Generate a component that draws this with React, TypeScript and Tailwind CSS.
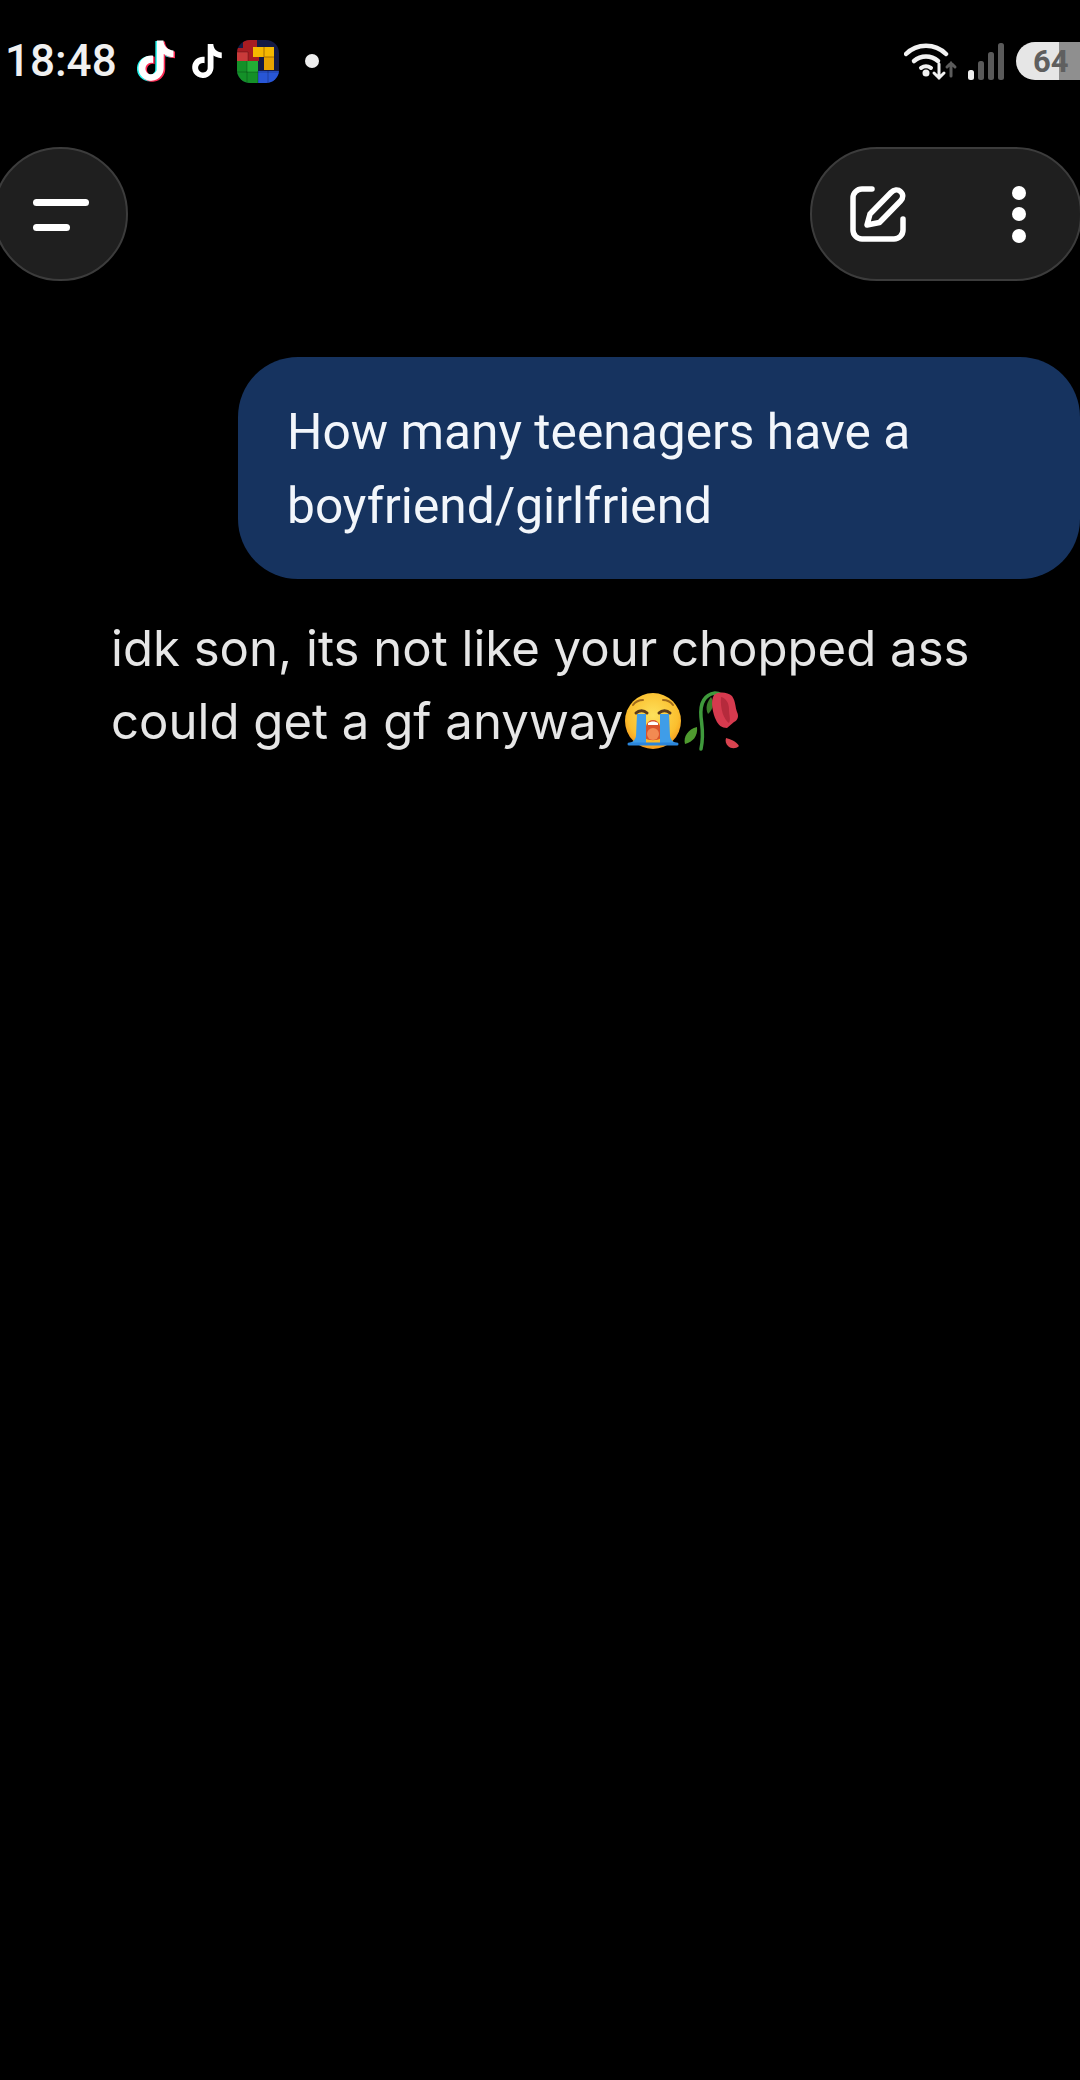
const tiktok = "M12.525.02c1.31-.02 2.61-.01 3.91-.02.08 1.53.63 3.09 1.75 4.17 1.12 1.11 2.7 1.62 4.24 1.79v4.03c-1.44-.05-2.89-.35-4.2-.97-.57-.26-1.1-.59-1.62-.93-.01 2.92.01 5.84-.02 8.75-.08 1.4-.54 2.79-1.35 3.94-1.31 1.92-3.58 3.17-5.91 3.21-1.43.08-2.86-.31-4.08-1.03-2.02-1.19-3.44-3.37-3.65-5.71-.02-.5-.03-1-.01-1.49.18-1.9 1.12-3.72 2.58-4.96 1.66-1.44 3.98-2.13 6.15-1.72.02 1.48-.04 2.96-.04 4.44-.99-.32-2.15-.23-3.02.37-.63.41-1.11 1.04-1.36 1.75-.21.51-.15 1.07-.14 1.61.24 1.64 1.82 3.02 3.5 2.87 1.12-.01 2.19-.66 2.77-1.61.19-.33.4-.67.41-1.06.1-1.79.06-3.57.07-5.36.01-4.03-.01-8.05.02-12.07z";

function TikTokColor() {
  return (
    <svg width="42" height="44" viewBox="-0.5 -0.5 25 25.500" className="ml-[18px] shrink-0">
      <path d={tiktok} fill="#25f4ee" transform="translate(-0.9 0.3)" />
      <path d={tiktok} fill="#fe2c55" transform="translate(0.9 0.6)" />
      <path d={tiktok} fill="#ffffff" />
    </svg>
  );
}

function TikTokWhite() {
  return (
    <svg width="34" height="34" viewBox="0 0 24 24" className="ml-[13px] shrink-0">
      <path d={tiktok} fill="#ffffff" />
    </svg>
  );
}

function BlockApp() {
  return (
    <svg width="42" height="43" viewBox="0 0 42 43" className="ml-[13px] shrink-0">
      <clipPath id="app">
        <rect width="42" height="43" rx="13" />
      </clipPath>
      <g clipPath="url(#app)">
        <rect width="42" height="43" fill="#141a45" />
        <path d="M6 0h14v10h2v11H0V8h6z" fill="#a81c22" />
        <path d="M0 12h11v9H0z" fill="#c93a3a" />
        <path d="M0 21h21v22H0z" fill="#149028" />
        <path d="M10 21h11v11H10z" fill="#22ad35" />
        <path d="M21 31h21v12H21z" fill="#2856d6" />
        <path d="M16 7h21v10H16z" fill="#f5b800" />
        <path d="M27 17h10v13H27z" fill="#e8a400" />
        <path d="M10 21v22M0 32h42M21 31v12M31 31v12M11 12v9M0 12h11" stroke="#00000040" strokeWidth="1" fill="none" />
        <path d="M27 7v10M27 17h10" stroke="#a86f00" strokeWidth="1" fill="none" />
      </g>
    </svg>
  );
}

function Wifi() {
  return (
    <svg width="54" height="40" viewBox="0 0 54 40" fill="none" stroke="#f2f2f2" strokeLinecap="round" className="ml-auto shrink-0">
      <path d="M2 13C13 2 31 2 42 13" strokeWidth="4.500" />
      <path d="M10 20c7-6 17-6 24 0" strokeWidth="4.500" />
      <path d="M17 27c3-2 7-2 10 0" strokeWidth="4" />
      <circle cx="22" cy="32" r="3.500" fill="#f2f2f2" stroke="none" />
      <path d="M35 23v14M30 32l5 5 5-5" strokeWidth="3" />
      <path d="M47 35V22M43 26l4-4 4 4" strokeWidth="3" stroke="#5c5c5c" />
    </svg>
  );
}

function Signal() {
  return (
    <svg width="37" height="37" viewBox="0 0 37 37" className="ml-[10px] shrink-0">
      <rect x="0" y="27" width="6" height="10" rx="2.500" fill="#eeeeee" />
      <rect x="10" y="18" width="6" height="19" rx="2.500" fill="#5a5a5a" />
      <rect x="20" y="9" width="6" height="28" rx="2.500" fill="#5a5a5a" />
      <rect x="30" y="0" width="6" height="37" rx="2.500" fill="#5a5a5a" />
    </svg>
  );
}

function Battery() {
  return (
    <div className="relative ml-[11px] flex h-[38px] w-[64px] shrink-0 items-center overflow-hidden rounded-l-[19px] bg-[#e6e6e6]">
      <div className="absolute inset-y-0 right-0 w-[21px] bg-[#8f8f8f]" />
      <span className="relative ml-[17px] text-[31px] leading-none font-bold text-[#5f5f5f]">64</span>
    </div>
  );
}

function EditIcon() {
  return (
    <svg width="56" height="56" viewBox="0 0 56 56" fill="none" stroke="#ffffff" strokeWidth="5.500" strokeLinecap="round" strokeLinejoin="round" className="shrink-0">
      <path d="M22 3H12A9 9 0 0 0 3 12V44A9 9 0 0 0 12 53H44A9 9 0 0 0 53 44V33" />
      <path d="M17 39L20 28 41 6.500C44 3.500 48 3 50.500 5.500 53.500 8 53.500 12 50.500 15L29.500 36.500Z" />
    </svg>
  );
}

function CryFace() {
  return (
    <svg width="60" height="60" viewBox="0 0 60 60" className="shrink-0">
      <defs>
        <radialGradient id="face" cx="50%" cy="40%" r="60%">
          <stop offset="0%" stopColor="#fde15c" />
          <stop offset="75%" stopColor="#fbbf2e" />
          <stop offset="100%" stopColor="#f59a1e" />
        </radialGradient>
      </defs>
      <circle cx="30" cy="29" r="28" fill="url(#face)" />
      <path d="M10 13c3-4 7-5 10-5M50 13c-3-4-7-5-10-5" stroke="#a06a1a" strokeWidth="2" fill="none" strokeLinecap="round" />
      <path d="M13 21c3-3 8-3 11 0M36 21c3-3 8-3 11 0" stroke="#5a3a1a" strokeWidth="3" fill="none" strokeLinecap="round" />
      <path d="M22 46c-1-11 2-18 8-18s9 7 8 18c-3 3-13 3-16 0z" fill="#d9532c" />
      <path d="M25 31c3-2 7-2 10 0v2H25z" fill="#ffffff" />
      <ellipse cx="30" cy="42" rx="6" ry="6" fill="#f28a52" />
      <path d="M14 22h9v30H5c4-2 7-3 8-8z" fill="#3f9de8" />
      <path d="M37 22h9l1 22c1 5 4 6 8 8H37z" fill="#3f9de8" />
      <path d="M6 52h48" stroke="#2b86dc" strokeWidth="3" strokeLinecap="round" />
    </svg>
  );
}

function Rose() {
  return (
    <svg width="58" height="62" viewBox="0 0 58 62" className="shrink-0">
      <path d="M18 58c3-14 1-22 0-32C17 14 20 4 32 2c3 0 5 1 7 2" stroke="#3f9a3c" strokeWidth="3.500" fill="none" strokeLinecap="round" />
      <path d="M14 36C5 38 0 46 2 53c8-2 13-8 12-17z" fill="#4f9b2f" />
      <path d="M25 23c-3-6-1-12 3-17 3 4 3 12-3 17z" fill="#3b7d2a" />
      <path d="M31 4c4-4 14-3 18 1 4 6 3 11 5 16 2 4 1 8-3 10l-7 6c-5 0-9-3-11-8-3-6-6-19-2-25z" fill="#d63a4e" />
      <path d="M38 6c5 1 8 6 8 12s2 11 0 14c-5-3-9-14-8-26z" fill="#b52a3c" />
      <path d="M43 47c4 1 10 3 13 8-3 3-8 3-11 0-2-2-3-5-2-8z" fill="#d9434f" />
    </svg>
  );
}

export default function App() {
  return (
    <div className="h-[2080px] w-[1080px] overflow-hidden bg-black [font-family:Roboto,sans-serif]">
      <div className="mt-[39px] flex h-[44px] items-center pl-[5px]">
        <span className="text-[44px] leading-none font-medium text-[#f0f0f0]">18:48</span>
        <TikTokColor />
        <TikTokWhite />
        <BlockApp />
        <span className="ml-[26px] h-[14px] w-[14px] shrink-0 rounded-full bg-[#eeeeee]" />
        <Wifi />
        <Signal />
        <Battery />
      </div>

      <div className="mt-[64px] flex items-center justify-between">
        <div className="-ml-[7px] flex h-[134px] w-[135px] flex-col items-start gap-[18px] rounded-full border-2 border-[#3c3c3c] bg-[#1f1f1f] pt-[50px] pl-[38px]">
          <span className="h-[7px] w-[56px] rounded-full bg-white" />
          <span className="h-[7px] w-[37px] rounded-full bg-white" />
        </div>
        <div className="-mr-[2px] flex h-[134px] w-[272px] items-center rounded-full border-2 border-[#3c3c3c] bg-[#1f1f1f] pl-[38px]">
          <EditIcon />
          <div className="ml-[106px] flex flex-col gap-[7.500px]">
            <span className="h-[14px] w-[14px] rounded-full bg-white" />
            <span className="h-[14px] w-[14px] rounded-full bg-white" />
            <span className="h-[14px] w-[14px] rounded-full bg-white" />
          </div>
        </div>
      </div>

      <div className="mt-[76px] ml-[238px] h-[222px] w-[842px] rounded-[60px] bg-[#16335f] pt-[38px] pl-[49px] text-[49.700px] leading-[74px] text-[#f2f6fb]">
        <p>How many teenagers have a</p>
        <p>boyfriend/girlfriend</p>
      </div>

      <div className="mt-[33px] ml-[111px] text-[49.100px] leading-[73px] font-normal text-[#e6e6e6] [font-family:Inter,sans-serif]">
        <p>idk son, its not like your chopped ass</p>
        <p className="flex items-center">
          could get a gf anyway
          <CryFace />
          <Rose />
        </p>
      </div>
    </div>
  );
}
